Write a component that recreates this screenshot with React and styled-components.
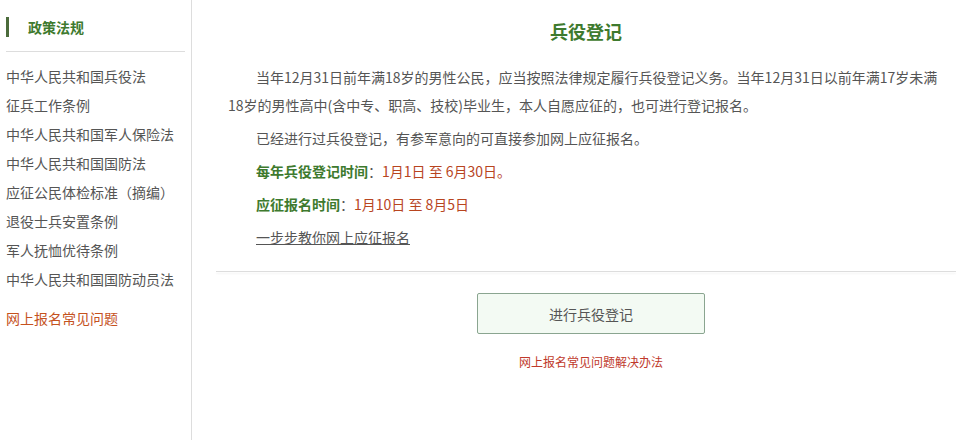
import React from 'react';
import styled, { createGlobalStyle } from 'styled-components';

const GlobalStyle = createGlobalStyle`
  html, body {
    margin: 0;
    padding: 0;
    background: #fff;
  }
  body {
    font-family: "Noto Sans CJK SC", "Noto Sans", "Liberation Sans", sans-serif;
    color: #555;
  }
`;

const Page = styled.div`
  display: flex;
  width: 962px;
  height: 440px;
  overflow: hidden;
`;

const Sidebar = styled.aside`
  width: 192px;
  flex-shrink: 0;
  border-right: 1px solid #ddd;
  box-sizing: border-box;
  padding: 17px 6px 0 6px;
`;

const SideTitle = styled.div`
  display: flex;
  align-items: center;
  height: 20px;
  border-left: 3px solid #4b6b3b;
  padding-left: 19px;
  font-size: 14px;
  font-weight: bold;
  color: #3e7a2e;
`;

const SideDivider = styled.div`
  height: 1px;
  background: #ddd;
  margin: 14px 0 10px 0;
`;

const SideList = styled.ul`
  list-style: none;
  margin: 0;
  padding: 0;
`;

const SideItem = styled.li`
  font-size: 14px;
  line-height: 29px;
  color: ${(p) => (p.$accent ? '#c5521e' : '#555')};
  margin-top: ${(p) => (p.$accent ? '10px' : '0')};
  white-space: nowrap;
`;

const Main = styled.main`
  flex: 1;
  padding: 18px 6px 0 24px;
`;

const Title = styled.h1`
  margin: 0;
  text-align: center;
  font-size: 18px;
  line-height: 26px;
  font-weight: bold;
  color: #3e7a2e;
`;

const Content = styled.div`
  padding: 19px 12px 20px 12px;
  display: flex;
  flex-direction: column;
  gap: 5px;
`;

const Para = styled.p`
  margin: 0;
  font-size: 14px;
  line-height: 28px;
  color: #555;
  text-indent: 2em;
`;

const Label = styled.b`
  color: #3e7a2e;
`;

const Value = styled.span`
  color: #b8451f;
`;

const GuideLink = styled.a`
  color: #555;
  text-decoration: underline;
`;

const Divider = styled.div`
  height: 1px;
  background: #ddd;
  box-shadow: 0 2px 2px #f2f2f2;
`;

const Actions = styled.div`
  display: flex;
  flex-direction: column;
  align-items: center;
  padding: 21px 0 0 10px;
`;

const RegisterButton = styled.button`
  width: 228px;
  height: 41px;
  background: #f3faf3;
  border: 1px solid #8aa590;
  border-radius: 2px;
  font-family: inherit;
  font-size: 14px;
  color: #555;
  cursor: pointer;
`;

const HelpLink = styled.a`
  margin-top: 19px;
  font-size: 12px;
  color: #c0392b;
  text-decoration: none;
`;

const laws = [
  '中华人民共和国兵役法',
  '征兵工作条例',
  '中华人民共和国军人保险法',
  '中华人民共和国国防法',
  '应征公民体检标准（摘编）',
  '退役士兵安置条例',
  '军人抚恤优待条例',
  '中华人民共和国国防动员法',
];

export default function App() {
  return (
    <>
      <GlobalStyle />
      <Page>
        <Sidebar>
          <SideTitle>政策法规</SideTitle>
          <SideDivider />
          <SideList>
            {laws.map((l) => (
              <SideItem key={l}>{l}</SideItem>
            ))}
            <SideItem $accent>网上报名常见问题</SideItem>
          </SideList>
        </Sidebar>
        <Main>
          <Title>兵役登记</Title>
          <Content>
            <Para>
              当年12月31日前年满18岁的男性公民，应当按照法律规定履行兵役登记义务。当年12月31日以前年满17岁未满18岁的男性高中(含中专、职高、技校)毕业生，本人自愿应征的，也可进行登记报名。
            </Para>
            <Para>已经进行过兵役登记，有参军意向的可直接参加网上应征报名。</Para>
            <Para>
              <Label>每年兵役登记时间</Label>：<Value>1月1日 至 6月30日。</Value>
            </Para>
            <Para>
              <Label>应征报名时间</Label>：<Value>1月10日 至 8月5日</Value>
            </Para>
            <Para>
              <GuideLink>一步步教你网上应征报名</GuideLink>
            </Para>
          </Content>
          <Divider />
          <Actions>
            <RegisterButton>进行兵役登记</RegisterButton>
            <HelpLink>网上报名常见问题解决办法</HelpLink>
          </Actions>
        </Main>
      </Page>
    </>
  );
}
